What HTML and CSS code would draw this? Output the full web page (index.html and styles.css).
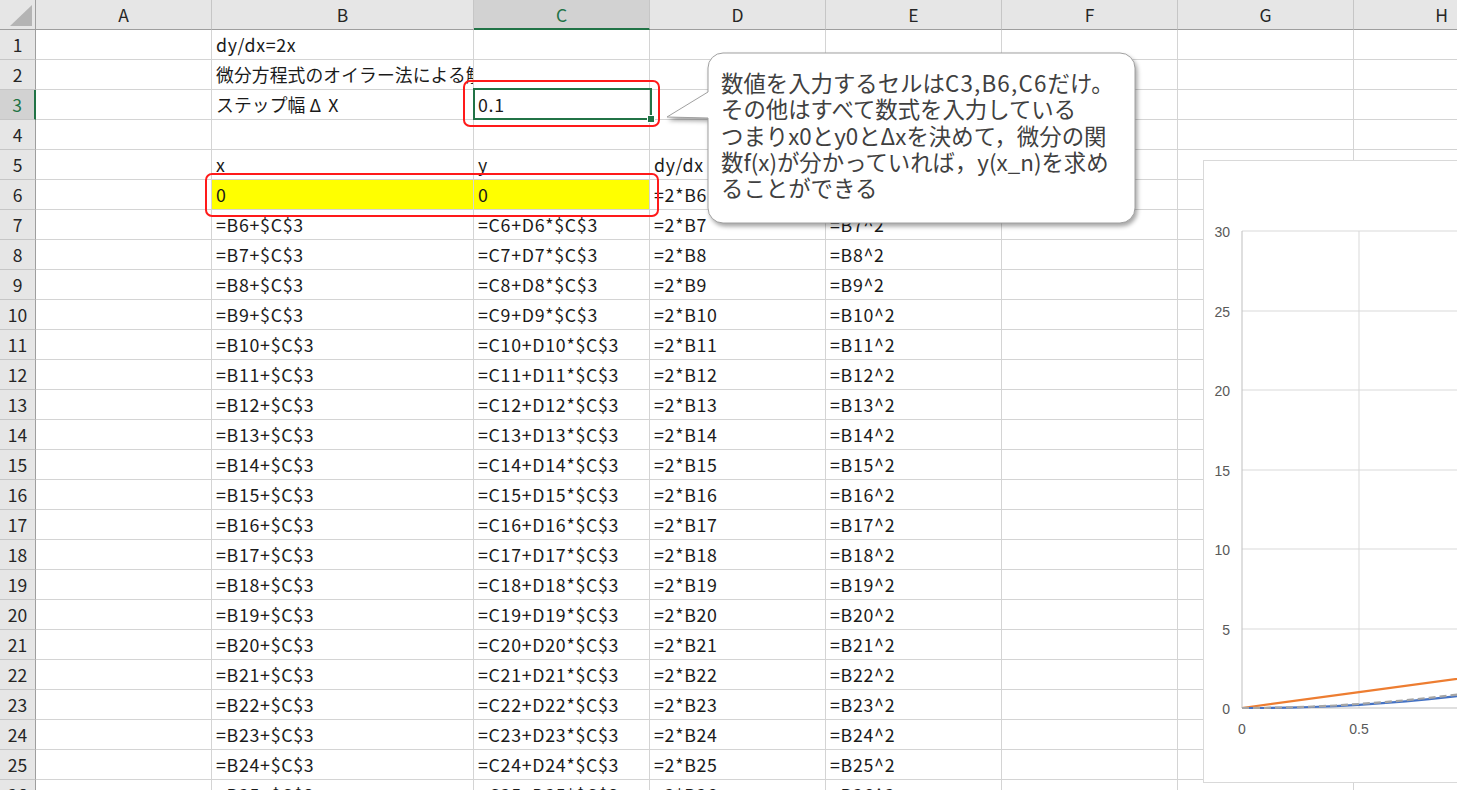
FILE: index.html
```html
<!DOCTYPE html>
<html lang="ja">
<head>
<meta charset="utf-8">
<title>Euler</title>
<link rel="stylesheet" href="styles.css">
</head>
<body>
<div class="sheet">
  <div class="row hdr">
    <div class="rh corner"><span class="tri"></span></div>
    <div class="ch a">A</div><div class="ch b">B</div><div class="ch c sel">C</div><div class="ch d">D</div><div class="ch e">E</div><div class="ch f">F</div><div class="ch g">G</div><div class="ch h">H</div>
  </div>
  <div class="row"><div class="rh">1</div><div class="cl a"></div><div class="cl b">dy/dx=2x</div><div class="cl c"></div><div class="cl d"></div><div class="cl e"></div><div class="cl f"></div><div class="cl g"></div><div class="cl h"></div></div>
  <div class="row"><div class="rh">2</div><div class="cl a"></div><div class="cl b jp">微分方程式のオイラー法による解</div><div class="cl c"></div><div class="cl d"></div><div class="cl e"></div><div class="cl f"></div><div class="cl g"></div><div class="cl h"></div></div>
  <div class="row"><div class="rh sel">3</div><div class="cl a"></div><div class="cl b jp">ステップ幅<span class="delta">Δ</span>X</div><div class="cl c">0.1</div><div class="cl d"></div><div class="cl e"></div><div class="cl f"></div><div class="cl g"></div><div class="cl h"></div></div>
  <div class="row"><div class="rh">4</div><div class="cl a"></div><div class="cl b"></div><div class="cl c"></div><div class="cl d"></div><div class="cl e"></div><div class="cl f"></div><div class="cl g"></div><div class="cl h"></div></div>
  <div class="row"><div class="rh">5</div><div class="cl a"></div><div class="cl b">x</div><div class="cl c">y</div><div class="cl d">dy/dx</div><div class="cl e"></div><div class="cl f"></div><div class="cl g"></div><div class="cl h"></div></div>
  <div class="row"><div class="rh">6</div><div class="cl a"></div><div class="cl b yel">0</div><div class="cl c yel">0</div><div class="cl d">=2*B6</div><div class="cl e"></div><div class="cl f"></div><div class="cl g"></div><div class="cl h"></div></div>
  <div class="row"><div class="rh">7</div><div class="cl a"></div><div class="cl b">=B6+$C$3</div><div class="cl c">=C6+D6*$C$3</div><div class="cl d">=2*B7</div><div class="cl e">=B7^2</div><div class="cl f"></div><div class="cl g"></div><div class="cl h"></div></div>
  <div class="row"><div class="rh">8</div><div class="cl a"></div><div class="cl b">=B7+$C$3</div><div class="cl c">=C7+D7*$C$3</div><div class="cl d">=2*B8</div><div class="cl e">=B8^2</div><div class="cl f"></div><div class="cl g"></div><div class="cl h"></div></div>
  <div class="row"><div class="rh">9</div><div class="cl a"></div><div class="cl b">=B8+$C$3</div><div class="cl c">=C8+D8*$C$3</div><div class="cl d">=2*B9</div><div class="cl e">=B9^2</div><div class="cl f"></div><div class="cl g"></div><div class="cl h"></div></div>
  <div class="row"><div class="rh">10</div><div class="cl a"></div><div class="cl b">=B9+$C$3</div><div class="cl c">=C9+D9*$C$3</div><div class="cl d">=2*B10</div><div class="cl e">=B10^2</div><div class="cl f"></div><div class="cl g"></div><div class="cl h"></div></div>
  <div class="row"><div class="rh">11</div><div class="cl a"></div><div class="cl b">=B10+$C$3</div><div class="cl c">=C10+D10*$C$3</div><div class="cl d">=2*B11</div><div class="cl e">=B11^2</div><div class="cl f"></div><div class="cl g"></div><div class="cl h"></div></div>
  <div class="row"><div class="rh">12</div><div class="cl a"></div><div class="cl b">=B11+$C$3</div><div class="cl c">=C11+D11*$C$3</div><div class="cl d">=2*B12</div><div class="cl e">=B12^2</div><div class="cl f"></div><div class="cl g"></div><div class="cl h"></div></div>
  <div class="row"><div class="rh">13</div><div class="cl a"></div><div class="cl b">=B12+$C$3</div><div class="cl c">=C12+D12*$C$3</div><div class="cl d">=2*B13</div><div class="cl e">=B13^2</div><div class="cl f"></div><div class="cl g"></div><div class="cl h"></div></div>
  <div class="row"><div class="rh">14</div><div class="cl a"></div><div class="cl b">=B13+$C$3</div><div class="cl c">=C13+D13*$C$3</div><div class="cl d">=2*B14</div><div class="cl e">=B14^2</div><div class="cl f"></div><div class="cl g"></div><div class="cl h"></div></div>
  <div class="row"><div class="rh">15</div><div class="cl a"></div><div class="cl b">=B14+$C$3</div><div class="cl c">=C14+D14*$C$3</div><div class="cl d">=2*B15</div><div class="cl e">=B15^2</div><div class="cl f"></div><div class="cl g"></div><div class="cl h"></div></div>
  <div class="row"><div class="rh">16</div><div class="cl a"></div><div class="cl b">=B15+$C$3</div><div class="cl c">=C15+D15*$C$3</div><div class="cl d">=2*B16</div><div class="cl e">=B16^2</div><div class="cl f"></div><div class="cl g"></div><div class="cl h"></div></div>
  <div class="row"><div class="rh">17</div><div class="cl a"></div><div class="cl b">=B16+$C$3</div><div class="cl c">=C16+D16*$C$3</div><div class="cl d">=2*B17</div><div class="cl e">=B17^2</div><div class="cl f"></div><div class="cl g"></div><div class="cl h"></div></div>
  <div class="row"><div class="rh">18</div><div class="cl a"></div><div class="cl b">=B17+$C$3</div><div class="cl c">=C17+D17*$C$3</div><div class="cl d">=2*B18</div><div class="cl e">=B18^2</div><div class="cl f"></div><div class="cl g"></div><div class="cl h"></div></div>
  <div class="row"><div class="rh">19</div><div class="cl a"></div><div class="cl b">=B18+$C$3</div><div class="cl c">=C18+D18*$C$3</div><div class="cl d">=2*B19</div><div class="cl e">=B19^2</div><div class="cl f"></div><div class="cl g"></div><div class="cl h"></div></div>
  <div class="row"><div class="rh">20</div><div class="cl a"></div><div class="cl b">=B19+$C$3</div><div class="cl c">=C19+D19*$C$3</div><div class="cl d">=2*B20</div><div class="cl e">=B20^2</div><div class="cl f"></div><div class="cl g"></div><div class="cl h"></div></div>
  <div class="row"><div class="rh">21</div><div class="cl a"></div><div class="cl b">=B20+$C$3</div><div class="cl c">=C20+D20*$C$3</div><div class="cl d">=2*B21</div><div class="cl e">=B21^2</div><div class="cl f"></div><div class="cl g"></div><div class="cl h"></div></div>
  <div class="row"><div class="rh">22</div><div class="cl a"></div><div class="cl b">=B21+$C$3</div><div class="cl c">=C21+D21*$C$3</div><div class="cl d">=2*B22</div><div class="cl e">=B22^2</div><div class="cl f"></div><div class="cl g"></div><div class="cl h"></div></div>
  <div class="row"><div class="rh">23</div><div class="cl a"></div><div class="cl b">=B22+$C$3</div><div class="cl c">=C22+D22*$C$3</div><div class="cl d">=2*B23</div><div class="cl e">=B23^2</div><div class="cl f"></div><div class="cl g"></div><div class="cl h"></div></div>
  <div class="row"><div class="rh">24</div><div class="cl a"></div><div class="cl b">=B23+$C$3</div><div class="cl c">=C23+D23*$C$3</div><div class="cl d">=2*B24</div><div class="cl e">=B24^2</div><div class="cl f"></div><div class="cl g"></div><div class="cl h"></div></div>
  <div class="row"><div class="rh">25</div><div class="cl a"></div><div class="cl b">=B24+$C$3</div><div class="cl c">=C24+D24*$C$3</div><div class="cl d">=2*B25</div><div class="cl e">=B25^2</div><div class="cl f"></div><div class="cl g"></div><div class="cl h"></div></div>
  <div class="row"><div class="rh">26</div><div class="cl a"></div><div class="cl b">=B25+$C$3</div><div class="cl c">=C25+D25*$C$3</div><div class="cl d">=2*B26</div><div class="cl e">=B26^2</div><div class="cl f"></div><div class="cl g"></div><div class="cl h"></div></div>
</div>

<div class="selbox"><span class="handle"></span></div>
<div class="redbox rb1"></div>
<div class="redbox rb2"></div>

<svg class="callout-shape" width="490" height="190" viewBox="0 0 490 190">
  <path class="callout-path" d="M63 8 H460 A15 15 0 0 1 475 23 V163 A15 15 0 0 1 460 178 H63 A15 15 0 0 1 48 163 V73 L7 72 L48 47 V23 A15 15 0 0 1 63 8 Z"/>
</svg>
<div class="callout-text">数値を入力するセルは<span class="lat">C3,B6,C6</span>だけ。<br>その他はすべて数式を入力している<br>つまりx0とy0とΔxを決めて，微分の関<br>数f(x)が分かっていれば，y(x_n)を求め<br>ることができる</div>

<div class="chart">
  <svg class="plot" width="300" height="623" viewBox="0 0 300 623">
    <g class="grid">
      <line x1="39" y1="71" x2="300" y2="71"/>
      <line x1="39" y1="151" x2="300" y2="151"/>
      <line x1="39" y1="230" x2="300" y2="230"/>
      <line x1="39" y1="310" x2="300" y2="310"/>
      <line x1="39" y1="389" x2="300" y2="389"/>
      <line x1="39" y1="469" x2="300" y2="469"/>
      <line x1="156" y1="71" x2="156" y2="548"/>
    </g>
    <g class="axis">
      <line x1="39" y1="71" x2="39" y2="548"/>
      <line x1="39" y1="548" x2="300" y2="548"/>
    </g>
    <g class="ylab">
      <text x="27" y="77">30</text>
      <text x="27" y="157">25</text>
      <text x="27" y="236">20</text>
      <text x="27" y="316">15</text>
      <text x="27" y="395">10</text>
      <text x="27" y="475">5</text>
      <text x="27" y="554">0</text>
    </g>
    <g class="xlab">
      <text x="39" y="574">0</text>
      <text x="156" y="574">0.5</text>
    </g>
    <polyline class="s-orange" points="39,548 156,532.1 273,516.3 320,510"/>
    <polyline class="s-blue" points="39,548 62.4,548 85.8,547.7 109.2,547 132.6,546.1 156,544.8 179.4,543.2 202.8,541.3 226.2,539.1 249.6,536.6 273,533.7 296.4,530.5 319.8,527.1"/>
    <polyline class="s-gray" points="39,548 62.4,547.8 85.8,547.4 109.2,546.6 132.6,545.5 156,544 179.4,542.3 202.8,540.2 226.2,537.8 249.6,535.1 273,532.1 296.4,528.8 319.8,525.1"/>
  </svg>
</div>
</body>
</html>
```

FILE: styles.css
```css
html, body {
  margin: 0;
  padding: 0;
  background: #ffffff;
}
body {
  width: 1457px;
  height: 790px;
  overflow: hidden;
  position: relative;
  font-family: "Noto Sans CJK JP", "Noto Sans", sans-serif;
  color: #1a1a1a;
}
.sheet {
  display: flex;
  flex-direction: column;
  width: 1530px;
}
.row {
  display: flex;
  height: 30px;
  flex: none;
}
.row > div {
  box-sizing: border-box;
  height: 30px;
  flex: none;
  border-right: 1px solid #d4d4d4;
  border-bottom: 1px solid #d4d4d4;
  white-space: nowrap;
  overflow: hidden;
}
.rh {
  width: 36px;
  background: #e6e6e6;
  border-right: 1px solid #9e9e9e !important;
  border-bottom: 1px solid #c6c6c6 !important;
  text-align: center;
  font-size: 17.5px;
  line-height: 29px;
  color: #262626;
}
.rh.sel {
  background: #d2d2d2;
  color: #217346;
  border-right: 2px solid #217346 !important;
}
.corner {
  position: relative;
}
.tri {
  position: absolute;
  right: 3px;
  bottom: 3px;
  width: 0;
  height: 0;
  border-left: 22px solid transparent;
  border-bottom: 21px solid #b4b4b4;
}
.hdr > div {
  border-bottom: 1px solid #9e9e9e !important;
}
.ch {
  background: #e6e6e6;
  border-right: 1px solid #c6c6c6 !important;
  text-align: center;
  font-size: 17.5px;
  line-height: 29px;
  color: #262626;
}
.ch.sel {
  background: #d2d2d2;
  color: #217346;
  border-bottom: 2px solid #217346 !important;
}
.a { width: 176px; }
.b { width: 262px; }
.c { width: 176px; }
.d { width: 176px; }
.e { width: 176px; }
.f { width: 176px; }
.g { width: 176px; }
.h { width: 176px; }
.cl {
  padding-left: 4px;
  font-size: 17.8px;
  letter-spacing: 0.7px;
  line-height: 29px;
  color: #1a1a1a;
}
.cl.jp {
  letter-spacing: 0.1px;
}
.delta {
  margin-left: 4px;
  margin-right: 7px;
}
.yel {
  background: #ffff00;
}

.selbox {
  position: absolute;
  left: 473px;
  top: 88px;
  width: 179px;
  height: 32px;
  box-sizing: border-box;
  border: 2px solid #217346;
}
.handle {
  position: absolute;
  right: -5px;
  bottom: -5px;
  width: 6px;
  height: 6px;
  background: #217346;
  border: 1px solid #ffffff;
}
.redbox {
  position: absolute;
  box-sizing: border-box;
  border: 2px solid #ff1a1a;
  border-radius: 7px;
}
.rb1 {
  left: 463px;
  top: 80px;
  width: 197px;
  height: 47px;
}
.rb2 {
  left: 205px;
  top: 173px;
  width: 454px;
  height: 44px;
}

.callout-shape {
  position: absolute;
  left: 660px;
  top: 45px;
  overflow: visible;
}
.callout-path {
  fill: #ffffff;
  stroke: #a0a0a0;
  stroke-width: 1;
  filter: drop-shadow(2px 3px 2px rgba(0, 0, 0, 0.35));
}
.callout-text {
  position: absolute;
  left: 721px;
  top: 69px;
  width: 420px;
  font-size: 22.4px;
  line-height: 26.3px;
  color: #404040;
  white-space: nowrap;
}
.callout-text .lat {
  letter-spacing: 1.2px;
}

.chart {
  position: absolute;
  left: 1203px;
  top: 160px;
  width: 300px;
  height: 623px;
  box-sizing: border-box;
  background: #ffffff;
  border: 1px solid #d9d9d9;
}
.plot {
  position: absolute;
  left: -1px;
  top: -1px;
}
.grid line {
  stroke: #d9d9d9;
  stroke-width: 1;
}
.axis line {
  stroke: #bfbfbf;
  stroke-width: 1;
}
.ylab text {
  font-family: "Liberation Sans", sans-serif;
  font-size: 14px;
  fill: #595959;
  text-anchor: end;
}
.xlab text {
  font-family: "Liberation Sans", sans-serif;
  font-size: 14px;
  fill: #595959;
  text-anchor: middle;
}
.s-orange {
  fill: none;
  stroke: #ed7d31;
  stroke-width: 2.2;
}
.s-blue {
  fill: none;
  stroke: #4472c4;
  stroke-width: 2.2;
}
.s-gray {
  fill: none;
  stroke: #a5a5a5;
  stroke-width: 2.2;
  stroke-dasharray: 7 4;
}
```
